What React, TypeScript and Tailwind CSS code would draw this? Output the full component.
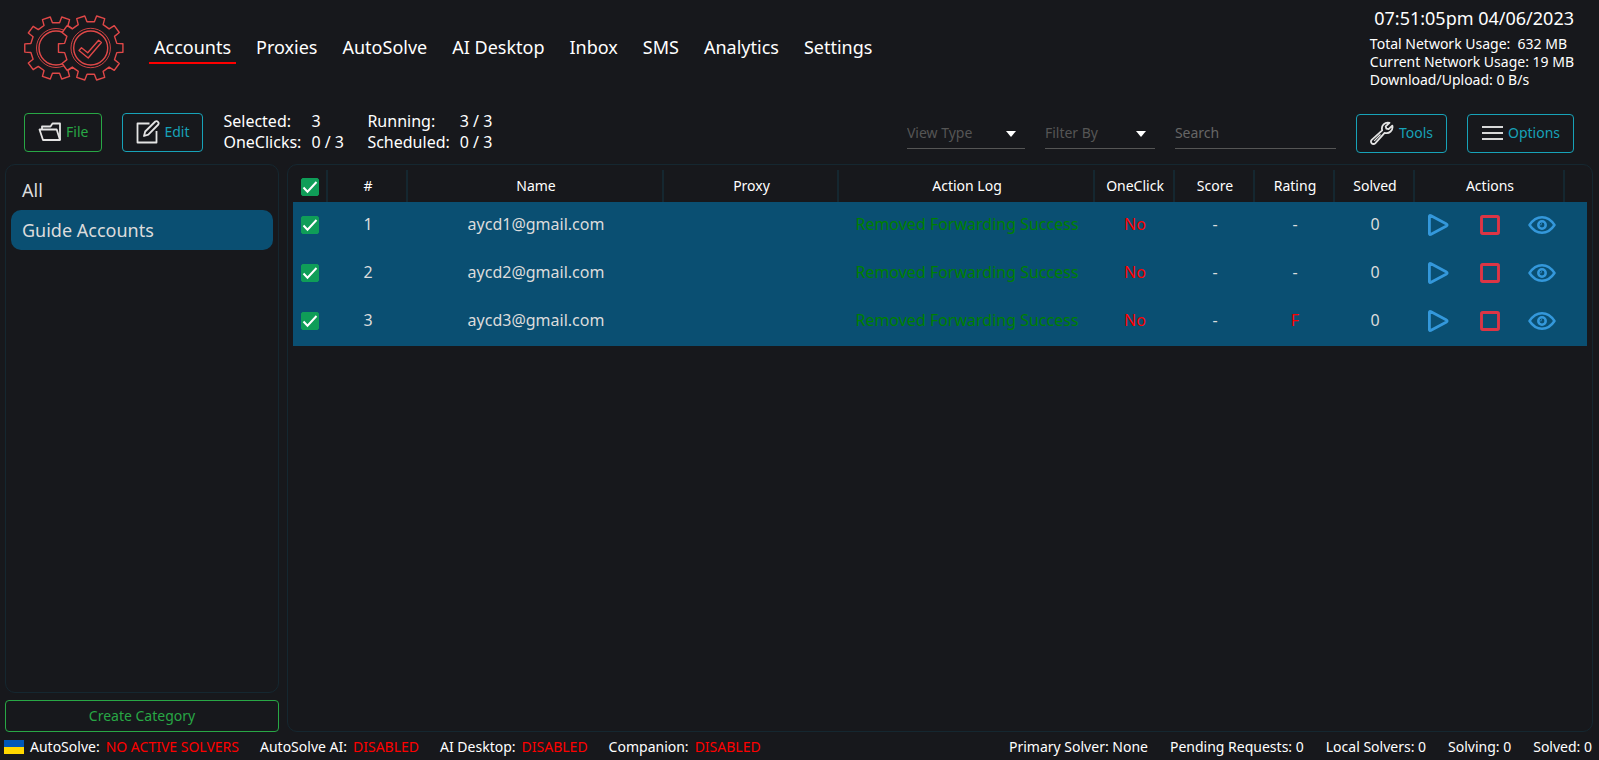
import React from "react";

const BLUE = "#3498db";

function gearPath(cx: number, cy: number, outer: number, inner: number) {
  const points: string[] = [];
  const at = (deg: number, r: number) => {
    const a = (deg * Math.PI) / 180;
    points.push(`${(cx + r * Math.cos(a)).toFixed(2)} ${(cy + r * Math.sin(a)).toFixed(2)}`);
  };
  for (let i = 0; i < 10; i++) {
    const c = i * 36;
    at(c - 10, inner);
    at(c - 7.5, outer);
    at(c + 7.5, outer);
    at(c + 10, inner);
  }
  return `M${points.join("L")}Z`;
}

function Logo() {
  return (
    <svg width="100" height="66" viewBox="0 0 100 66" fill="#17181c" stroke="#e04848" strokeWidth="1.4" strokeLinejoin="round" aria-hidden="true">
      <path d={gearPath(32, 33, 31.5, 25.5)} />
      <circle cx="32" cy="33" r="19.5" strokeWidth="0.9" />
      <circle cx="32" cy="33" r="17" />
      <path d={gearPath(66.7, 33, 32.5, 26.5)} />
      <circle cx="66.7" cy="33" r="19.7" strokeWidth="0.9" />
      <circle cx="66.7" cy="33" r="17" />
      <path d="M55 35.5l2.5-2.8 6.2 5L74.600 25.300l2.800 2.200L64.200 43z" />
    </svg>
  );
}

function FolderIcon() {
  return (
    <svg width="24" height="20" viewBox="0 0 24 20" fill="none" stroke="#e4e4e4" strokeWidth="1.8" strokeLinejoin="round" aria-hidden="true">
      <path d="M4 7V4.500h8.500l2-3H22V18" />
      <path d="M1.500 7.500h17.200L22 18H5z" />
    </svg>
  );
}

function EditIcon() {
  return (
    <svg width="24" height="24" viewBox="0 0 24 24" fill="none" stroke="#e4e4e4" strokeWidth="1.8" strokeLinejoin="round" aria-hidden="true">
      <path d="M13.500 3.500H1.500v19h19V11" />
      <path d="M8 16l1.200-4.500L19.300 1.500a2.200 2.200 0 0 1 3 3L12.300 14.600z" />
    </svg>
  );
}

function WrenchIcon() {
  return (
    <svg width="25" height="24" viewBox="0 0 25 24" fill="none" stroke="#e4e4e4" strokeWidth="1.8" strokeLinejoin="round" aria-hidden="true">
      <path d="M19.500 1.800a6 6 0 0 0-7.300 7.600L1.700 18.800a2.400 2.400 0 0 0 3.500 3.500l9.400-10.500a6 6 0 0 0 7.700-7.200l-3.700 3.600-2.300-.6-.6-2.300z" />
      <path d="M4.200 19.800L10.500 13.500" strokeWidth="1.2" />
    </svg>
  );
}

function MenuIcon() {
  return (
    <svg width="23" height="16" viewBox="0 0 23 16" stroke="#d8d8d8" strokeWidth="2" aria-hidden="true">
      <path d="M1 2h21M1 8h21M1 14h21" />
    </svg>
  );
}

function Check({ label }: { label: string }) {
  return (
    <label className="relative block size-[18px]">
      <input type="checkbox" defaultChecked aria-label={label} className="peer block size-[18px] appearance-none rounded-[2px] border border-[#0f9d58] checked:bg-[#0f9d58]" />
      <svg className="pointer-events-none absolute inset-0 hidden peer-checked:block" width="18" height="18" viewBox="0 0 18 18" fill="none" stroke="#fff" strokeWidth="2" aria-hidden="true">
        <path d="M2.500 9.500l4 4.200L15.500 4" />
      </svg>
    </label>
  );
}

const tabs = ["Accounts", "Proxies", "AutoSolve", "AI Desktop", "Inbox", "SMS", "Analytics", "Settings"];

const stats = [
  [["Selected:", "3"], ["OneClicks:", "0 / 3"]],
  [["Running:", "3 / 3"], ["Scheduled:", "0 / 3"]],
];

const columns = ["#", "Name", "Proxy", "Action Log", "OneClick", "Score", "Rating", "Solved", "Actions"];

const rows = [
  { id: 1, name: "aycd1@gmail.com", rating: "-" },
  { id: 2, name: "aycd2@gmail.com", rating: "-" },
  { id: 3, name: "aycd3@gmail.com", rating: "F" },
];

const services = [
  ["AutoSolve:", "NO ACTIVE SOLVERS"],
  ["AutoSolve AI:", "DISABLED"],
  ["AI Desktop:", "DISABLED"],
  ["Companion:", "DISABLED"],
];

const counters = ["Primary Solver: None", "Pending Requests: 0", "Local Solvers: 0", "Solving: 0", "Solved: 0"];

function ToolButton({ label, green, children }: { label: string; green?: boolean; children: React.ReactNode }) {
  return (
    <button
      type="button"
      className={
        "flex h-[39px] items-center gap-1 rounded border px-[13px] text-sm " +
        (green ? "border-[#28a745] text-[#28a745]" : "border-[#17a2b8] text-[#17a2b8]")
      }
    >
      {children}
      {label}
    </button>
  );
}

function Picker({ label, className }: { label: string; className: string }) {
  return (
    <div className={"relative " + className}>
      <select aria-label={label} className="h-8 w-full appearance-none border-b border-[#555] bg-transparent text-sm text-[#555] outline-none">
        <option>{label}</option>
      </select>
      <svg className="pointer-events-none absolute top-3.5 right-[9px]" width="10" height="6" viewBox="0 0 10 6" fill="#fff" aria-hidden="true">
        <path d="M0 0h10L5 6z" />
      </svg>
    </div>
  );
}

function RowActions({ name }: { name: string }) {
  return (
    <div className="flex h-[46px] items-center justify-center gap-6">
      <button type="button" aria-label={`Start ${name}`} className="flex size-7 items-center justify-center">
        <svg width="22" height="24" viewBox="0 0 22 24" fill="none" stroke={BLUE} strokeWidth="2.8" strokeLinejoin="round">
          <path d="M2.400 3.200v17.600a.8.8 0 0 0 1.200.6L19.500 13a1.100 1.100 0 0 0 0-2L3.600 2.600a.8.8 0 0 0-1.200.6z" />
        </svg>
      </button>
      <button type="button" aria-label={`Stop ${name}`} className="flex size-7 items-center justify-center">
        <svg width="20" height="20" viewBox="0 0 20 20" fill="none" stroke="#dc3545" strokeWidth="2.9">
          <rect x="1.500" y="1.500" width="17" height="17" rx="1.200" />
        </svg>
      </button>
      <button type="button" aria-label={`View ${name}`} className="flex size-7 items-center justify-center">
        <svg width="28" height="20" viewBox="0 0 28 20" fill="none" stroke={BLUE} strokeWidth="2.500" strokeLinejoin="round">
          <path d="M1.500 10C5 4.700 9.300 2.200 14 2.200S23 4.700 26.500 10C23 15.300 18.700 17.800 14 17.800S5 15.300 1.500 10z" />
          <circle cx="14" cy="10" r="3.700" />
          <path d="M14 8.600a1.500 1.500 0 0 0-1.200 1.800" strokeWidth="1" />
        </svg>
      </button>
    </div>
  );
}

export default function App() {
  return (
    <div className="flex min-h-screen flex-col bg-[#17181c] font-['Noto_Sans',sans-serif] text-white">
      <header className="flex h-[102px] items-start justify-between pr-[25px] pl-6">
        <div className="flex items-start">
          <a href="#home" aria-label="Home" className="mt-[15px]">
            <Logo />
          </a>
          <nav className="mt-8 ml-[25px] flex gap-[15px] text-lg leading-[30px]">
            {tabs.map((tab, i) => (
              <a key={tab} href={`#${tab}`} className={"border-b-2 px-[5px] " + (i === 0 ? "border-[#ff0000]" : "border-transparent")}>
                {tab}
              </a>
            ))}
          </nav>
        </div>
        <div className="pt-1.5 text-sm leading-[18px]">
          <p className="mb-[5px] text-right text-lg leading-6">07:51:05pm 04/06/2023</p>
          <p className="whitespace-pre">Total Network Usage:  632 MB</p>
          <p>Current Network Usage: 19 MB</p>
          <p>Download/Upload: 0 B/s</p>
        </div>
      </header>

      <div className="flex h-[62px] items-center justify-between pr-[25px] pl-6">
        <div className="flex items-center gap-5 pb-0.5">
          <ToolButton label="File" green>
            <FolderIcon />
          </ToolButton>
          <ToolButton label="Edit">
            <EditIcon />
          </ToolButton>
          {stats.map((group) => (
            <dl key={group[0][0]} className="grid grid-cols-[auto_auto] gap-x-2.5 text-base leading-[21px]">
              {group.map(([name, value]) => (
                <React.Fragment key={name}>
                  <dt>{name}</dt>
                  <dd className="min-w-9">{value}</dd>
                </React.Fragment>
              ))}
            </dl>
          ))}
        </div>
        <div className="flex items-center gap-5">
          <Picker label="View Type" className="w-[118px]" />
          <Picker label="Filter By" className="w-[110px]" />
          <input type="search" aria-label="Search" placeholder="Search" className="h-8 w-[161px] border-b border-[#555] bg-transparent text-sm outline-none placeholder:text-[#666]" />
          <ToolButton label="Tools">
            <WrenchIcon />
          </ToolButton>
          <ToolButton label="Options">
            <MenuIcon />
          </ToolButton>
        </div>
      </div>

      <main className="flex flex-1 gap-2 pr-1.5 pl-[5px]">
        <aside className="flex w-[274px] shrink-0 flex-col gap-[7px]">
          <ul className="flex-1 rounded-[10px] border border-[#152730] p-[5px] text-lg text-[#dcdcdc]">
            <li>
              <button type="button" className="block h-10 w-full px-[11px] text-left">All</button>
            </li>
            <li>
              <button type="button" className="block h-10 w-full rounded-[10px] bg-[#0a4f72] px-[11px] text-left">Guide Accounts</button>
            </li>
          </ul>
          <button type="button" className="h-8 rounded border border-[#28a745] text-sm text-[#28a745]">Create Category</button>
        </aside>

        <section className="flex-1 rounded-[10px] border border-[#152730] p-[5px]">
          <table className="w-full table-fixed border-collapse text-center">
            <colgroup>
              <col className="w-[35px]" />
              <col className="w-20" />
              <col className="w-64" />
              <col />
              <col className="w-64" />
              <col className="w-20" />
              <col className="w-20" />
              <col className="w-20" />
              <col className="w-20" />
              <col className="w-[150px]" />
              <col className="w-[22px]" />
            </colgroup>
            <thead>
              <tr className="h-8 text-sm">
                <th className="p-0 pt-0.5 pl-2 shadow-[inset_-2px_0_#152730]">
                  <Check label="Select all accounts" />
                </th>
                {columns.map((c) => (
                  <th key={c} scope="col" className="p-0 font-normal shadow-[inset_-2px_0_#152730]">{c}</th>
                ))}
                <td className="p-0" />
              </tr>
            </thead>
            <tbody>
              {rows.map((r) => (
                <tr key={r.id} className="h-12 bg-[#0a4f72] align-top leading-[44px] text-[#dcdcdc] [&>td]:p-0">
                  <td>
                    <div className="flex h-[46px] items-center pl-2">
                      <Check label={`Select ${r.name}`} />
                    </div>
                  </td>
                  <td>{r.id}</td>
                  <td>{r.name}</td>
                  <td />
                  <td className="text-[#008000]">Removed Forwarding Success</td>
                  <td className="text-[#ff0000]">No</td>
                  <td>-</td>
                  <td className={r.rating === "F" ? "text-[#ff0000]" : ""}>{r.rating}</td>
                  <td>0</td>
                  <td>
                    <RowActions name={r.name} />
                  </td>
                  <td />
                </tr>
              ))}
            </tbody>
          </table>
        </section>
      </main>

      <footer className="flex h-7 items-center justify-between pt-0.5 pr-[7px] pl-1 text-sm">
        <div className="flex items-center gap-[21px]">
          {services.map(([name, state], i) => (
            <p key={name} className="flex items-center gap-1.5">
              {i === 0 && (
                <svg width="20" height="14" viewBox="0 0 20 14" role="img" aria-label="Ukraine">
                  <path d="M0 0h20v7H0z" fill="#0057b8" />
                  <path d="M0 7h20v7H0z" fill="#ffd700" />
                </svg>
              )}
              <span>{name}</span>
              <span className="text-[#ff0000]">{state}</span>
            </p>
          ))}
        </div>
        <div className="flex gap-[22px]">
          {counters.map((c) => (
            <p key={c}>{c}</p>
          ))}
        </div>
      </footer>
    </div>
  );
}
